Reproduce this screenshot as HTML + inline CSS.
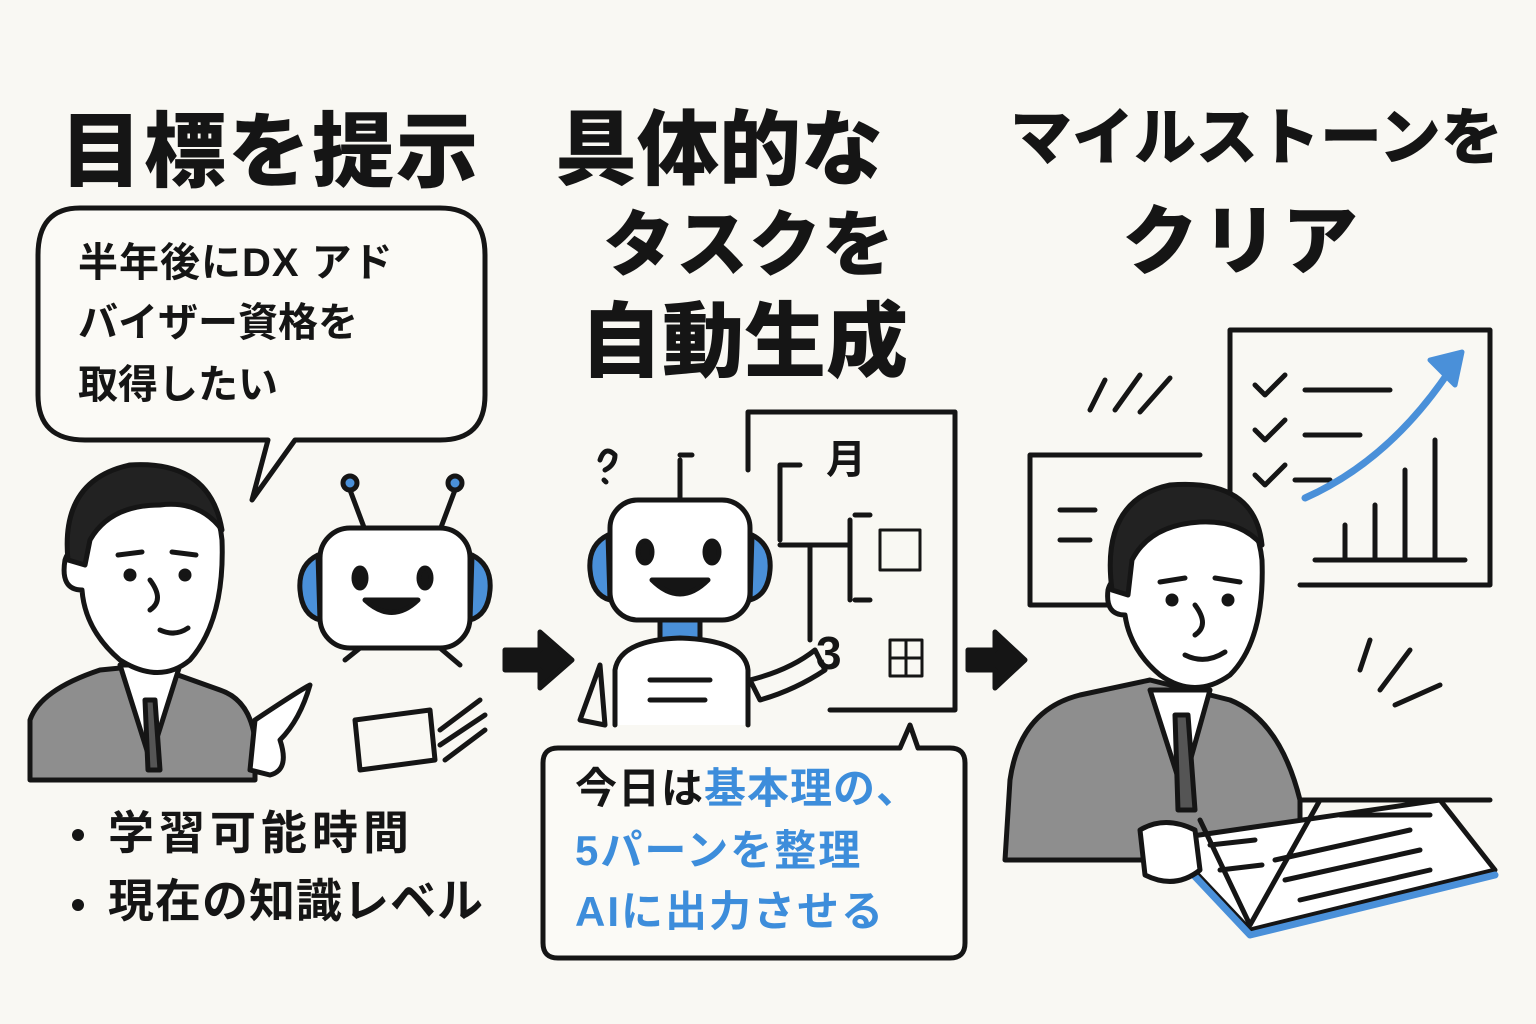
<!DOCTYPE html>
<html><head><meta charset="utf-8">
<style>
html,body{margin:0;padding:0;background:#f9f8f3;}
body{width:1536px;height:1024px;position:relative;overflow:hidden;font-family:"Liberation Sans","Noto Sans CJK JP",sans-serif;}
.t{position:absolute;font-weight:900;color:#151515;white-space:nowrap;line-height:1;}
svg{position:absolute;left:0;top:0;}
</style></head><body>
<svg width="1536" height="1024" viewBox="0 0 1536 1024" fill="none" stroke="#151515" stroke-width="5" stroke-linecap="round" stroke-linejoin="round">
<path d="M80 208 H440 Q485 208 485 255 V395 Q485 440 440 440 H295 L252 500 L268 440 H85 Q38 440 38 395 V255 Q38 208 80 208Z" fill="#fbfaf6"/>
<path d="M30 780 L30 720 Q40 690 100 670 L150 665 L220 690 Q250 700 255 740 L255 780Z" fill="#8e8e8e"/>
<path d="M120 665 L150 760 L180 665Z" fill="#fff"/>
<path d="M145 700 L155 700 L160 770 L148 770Z" fill="#555"/>
<path d="M75 520 Q80 470 140 468 Q215 470 222 540 Q225 620 190 660 Q160 685 120 660 Q85 630 82 590 Q60 590 65 560 Q70 545 80 555Z" fill="#fff"/>
<path d="M68 560 Q60 480 130 465 Q210 460 222 530 Q200 500 160 505 Q110 505 90 540 L85 565Z" fill="#222"/>
<circle cx="130" cy="575" r="4" fill="#151515"/><circle cx="185" cy="575" r="4" fill="#151515"/>
<path d="M118 555 L142 552 M172 552 L196 555 M150 580 Q165 600 150 610 M160 630 Q175 637 188 628"/>
<path d="M255 720 Q300 690 310 685 Q300 720 280 740 Q290 770 270 775 L250 770Z" fill="#fff"/>
<path d="M350 490 L365 530 M455 490 L440 530"/>
<circle cx="350" cy="483" r="7" fill="#4a90d9"/><circle cx="455" cy="483" r="7" fill="#4a90d9"/>
<rect x="320" y="528" width="150" height="120" rx="30" fill="#fff"/>
<path d="M318 555 Q298 565 300 590 Q302 615 320 620Z M472 555 Q492 565 490 590 Q488 615 470 620Z" fill="#4a90d9"/>
<ellipse cx="360" cy="578" rx="6" ry="10" fill="#151515"/><ellipse cx="425" cy="578" rx="6" ry="10" fill="#151515"/>
<path d="M365 600 Q392 625 418 600Z" fill="#151515"/>
<path d="M345 660 L360 648 M440 648 L460 665 M355 720 L430 710 L435 760 L360 770Z"/>
<path d="M440 730 L480 700 M440 745 L485 715 M445 760 L485 730"/>
<circle cx="78" cy="835" r="6" fill="#151515" stroke="none"/><circle cx="78" cy="905" r="6" fill="#151515" stroke="none"/>
<path d="M505 650 H540 V632 L572 660 L540 688 V670 H505Z" fill="#151515"/>
<path d="M968 650 H995 V632 L1025 660 L995 688 V670 H968Z" fill="#151515"/>
<path d="M748 412 H955 V710 H830 M748 412 V470"/>
<path d="M780 465 H800 M780 465 V540 M780 545 H850 M810 545 V640 M850 520 V600 M855 515 H870 M855 600 H870"/>
<rect x="880" y="530" width="40" height="40" stroke-width="3"/>
<rect x="890" y="640" width="32" height="36" stroke-width="3"/>
<path d="M906 640 V676 M890 658 H922" stroke-width="3"/>
<path d="M600 460 Q605 445 615 455 Q615 465 605 470 M604 480 L606 482 M680 460 V500 M680 455 H692"/>
<rect x="610" y="500" width="140" height="120" rx="28" fill="#fff"/>
<path d="M608 535 Q588 545 590 570 Q592 595 610 600Z M752 535 Q772 545 770 570 Q768 595 750 600Z" fill="#4a90d9"/>
<ellipse cx="645" cy="552" rx="7" ry="11" fill="#151515"/><ellipse cx="712" cy="552" rx="7" ry="11" fill="#151515"/>
<path d="M652 580 Q680 608 708 580Z" fill="#151515"/>
<rect x="660" y="620" width="40" height="20" fill="#4a90d9"/>
<path d="M615 725 V670 Q620 640 680 638 Q745 640 748 670 V725" fill="#fff"/>
<path d="M650 680 H710 M650 700 H705"/>
<path d="M600 665 L580 720 L605 725Z M750 680 Q790 670 815 650 L825 670 Q795 690 760 700Z"/>
<path d="M560 748 H900 L910 725 L918 748 H950 Q965 748 965 763 V943 Q965 958 950 958 H558 Q543 958 543 943 V763 Q543 748 558 748Z" fill="#fbfaf6"/>
<path d="M1030 455 H1200 M1030 455 V605 H1120 M1060 510 H1095 M1060 540 H1090"/>
<path d="M1230 330 H1490 V585 H1300 M1230 330 V500"/>
<path d="M1255 385 L1265 395 L1285 375 M1255 430 L1265 440 L1285 420 M1255 475 L1265 485 L1285 465 M1305 390 H1390 M1305 435 H1360 M1295 480 H1330"/>
<path d="M1305 498 Q1390 460 1450 370" stroke="#4a90d9" stroke-width="7"/>
<path d="M1430 360 L1462 352 L1455 385Z" fill="#4a90d9" stroke="#4a90d9"/>
<path d="M1315 560 H1465 M1345 525 V560 M1375 505 V560 M1405 470 V560 M1435 440 V560"/>
<path d="M1090 410 L1105 380 M1115 410 L1140 375 M1140 412 L1170 378"/>
<path d="M1360 670 L1370 640 M1380 690 L1410 650 M1395 705 L1440 685"/>
<path d="M1005 860 L1010 780 Q1020 710 1080 695 L1150 680 L1230 700 Q1280 720 1300 800 L1300 860Z" fill="#8e8e8e"/>
<path d="M1150 690 L1182 790 L1210 690Z" fill="#fff"/>
<path d="M1175 715 L1188 715 L1195 810 L1178 810Z" fill="#555"/>
<path d="M1120 560 Q1125 490 1185 488 Q1255 492 1262 560 Q1265 640 1230 675 Q1195 700 1160 675 Q1130 650 1125 615 Q1105 615 1108 590 Q1112 575 1122 585Z" fill="#fff"/>
<path d="M1112 590 Q1100 500 1170 485 Q1255 478 1262 545 Q1240 520 1200 522 Q1150 525 1132 560 L1128 595Z" fill="#222"/>
<circle cx="1172" cy="600" r="4" fill="#151515"/><circle cx="1228" cy="600" r="4" fill="#151515"/>
<path d="M1160 582 L1185 578 M1215 578 L1240 582 M1195 605 Q1210 625 1195 635 M1185 655 Q1205 665 1225 652"/>
<path d="M1165 840 L1250 930 L1495 870 L1440 800 Z" fill="#fff"/>
<path d="M1170 850 L1250 935 L1495 875" stroke="#4a90d9" stroke-width="7"/>
<path d="M1250 925 L1320 800 L1440 800 M1250 925 L1200 820 M1275 860 L1410 830 M1285 880 L1420 850 M1300 900 L1430 870 M1340 815 L1430 815 M1210 845 L1255 840 M1220 870 L1262 865"/>
<path d="M1140 830 Q1165 815 1195 830 L1200 870 Q1175 890 1145 875Z" fill="#fff"/>
<path d="M1300 800 H1490"/>
</svg>

<div class="t" style="left:60px;top:112px;font-size:82px;letter-spacing:2px">目標を提示</div>
<div class="t" style="left:555px;top:110px;font-size:82px">具体的な</div>
<div class="t" style="left:603px;top:210px;font-size:72px;letter-spacing:1px">タスクを</div>
<div class="t" style="left:580px;top:302px;font-size:82px">自動生成</div>
<div class="t" style="left:1010px;top:108px;font-size:62px">マイルストーンを</div>
<div class="t" style="left:1122px;top:205px;font-size:76px;letter-spacing:4px">クリア</div>

<div class="t" style="left:78px;top:243px;font-size:40px;font-weight:700;letter-spacing:1px">半年後にDX アド</div>
<div class="t" style="left:78px;top:303px;font-size:40px;font-weight:700">バイザー資格を</div>
<div class="t" style="left:78px;top:365px;font-size:40px;font-weight:700">取得したい</div>

<div class="t" style="left:108px;top:810px;font-size:46px;font-weight:700;letter-spacing:5px">学習可能時間</div>
<div class="t" style="left:108px;top:878px;font-size:46px;font-weight:700;letter-spacing:1px">現在の知識レベル</div>

<div class="t" style="left:826px;top:440px;font-size:40px;font-weight:700">月</div>
<div class="t" style="left:816px;top:630px;font-size:46px;font-weight:700">3</div>

<div class="t" style="left:575px;top:768px;font-size:42px;font-weight:700;letter-spacing:1px">今日は<span style="color:#3d8ddb">基本理の、</span></div>
<div class="t" style="left:575px;top:830px;font-size:42px;font-weight:700;color:#3d8ddb;letter-spacing:2px">5パーンを整理</div>
<div class="t" style="left:575px;top:891px;font-size:42px;font-weight:700;color:#3d8ddb;letter-spacing:2px">AIに出力させる</div>
</body></html>
